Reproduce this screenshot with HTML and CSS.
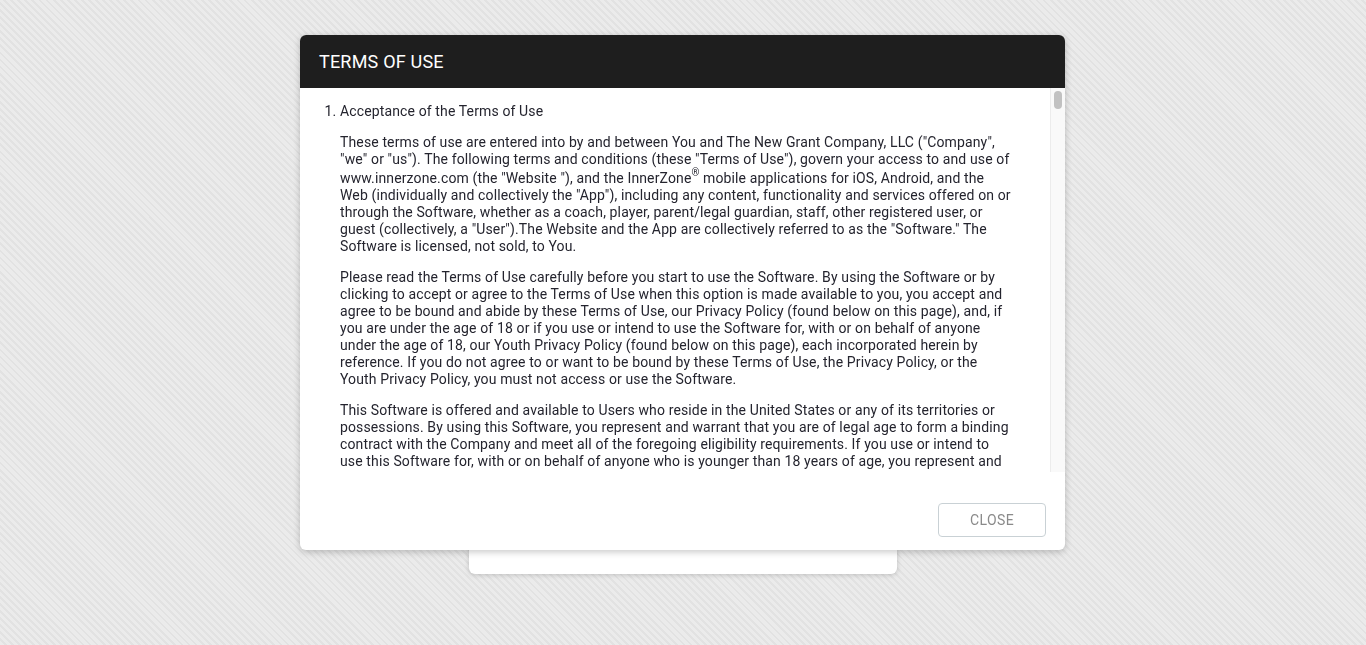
FILE: index.html
```html
<!DOCTYPE html>
<html lang="en">
<head>
<meta charset="utf-8">
<title>Terms of Use</title>
<link rel="stylesheet" href="styles.css">
</head>
<body>
<div class="page-card"></div>

<div class="modal">
  <div class="modal-header">
    <h2 class="modal-title">TERMS OF USE</h2>
  </div>
  <div class="modal-body">
    <div class="terms">
      <ol class="terms-list">
        <li>
          <div class="terms-heading">Acceptance of the Terms of Use</div>
          <p>These terms of use are entered into by and between You and The New Grant Company, LLC ("Company",<br>"we" or "us"). The following terms and conditions (these "Terms of Use"), govern your access to and use of<br>www.innerzone.com (the "Website "), and the InnerZone<sup>®</sup> mobile applications for iOS, Android, and the<br>Web (individually and collectively the "App"), including any content, functionality and services offered on or<br>through the Software, whether as a coach, player, parent/legal guardian, staff, other registered user, or<br>guest (collectively, a "User").The Website and the App are collectively referred to as the "Software." The<br>Software is licensed, not sold, to You.</p>
          <p>Please read the Terms of Use carefully before you start to use the Software. By using the Software or by<br>clicking to accept or agree to the Terms of Use when this option is made available to you, you accept and<br>agree to be bound and abide by these Terms of Use, our Privacy Policy (found below on this page), and, if<br>you are under the age of 18 or if you use or intend to use the Software for, with or on behalf of anyone<br>under the age of 18, our Youth Privacy Policy (found below on this page), each incorporated herein by<br>reference. If you do not agree to or want to be bound by these Terms of Use, the Privacy Policy, or the<br>Youth Privacy Policy, you must not access or use the Software.</p>
          <p>This Software is offered and available to Users who reside in the United States or any of its territories or<br>possessions. By using this Software, you represent and warrant that you are of legal age to form a binding<br>contract with the Company and meet all of the foregoing eligibility requirements. If you use or intend to<br>use this Software for, with or on behalf of anyone who is younger than 18 years of age, you represent and</p>
        </li>
      </ol>
    </div>
    <div class="scrollbar"><div class="scrollbar-thumb"></div></div>
  </div>
  <div class="modal-footer">
    <button class="btn-close" type="button">CLOSE</button>
  </div>
</div>
</body>
</html>
```
FILE: styles.css
```css
html, body {
  margin: 0;
  padding: 0;
}

body {
  height: 645px;
  overflow: hidden;
  font-family: Roboto, "Liberation Sans", sans-serif;
  background-color: #ebebeb;
  background-image: repeating-linear-gradient(45deg, #ebebeb 0, #ebebeb 3px, #e2e2e2 3px, #e2e2e2 5px);
}

.page-card {
  width: 428px;
  height: 534px;
  margin: 40px auto 0;
  background: #fff;
  border-radius: 6px;
  box-shadow: 0 1px 5px rgba(0, 0, 0, 0.18);
}

.modal {
  position: fixed;
  top: 35px;
  left: 300px;
  width: 765px;
  height: 515px;
  display: flex;
  flex-direction: column;
  background: #fff;
  border-radius: 6px;
  box-shadow: 0 2px 7px rgba(0, 0, 0, 0.22);
  overflow: hidden;
}

.modal-header {
  height: 53px;
  flex: none;
  background: #1e1e1e;
  display: flex;
  align-items: center;
  padding: 0 19px;
}

.modal-title {
  margin: 0;
  color: #fff;
  font-size: 18px;
  font-weight: 400;
  letter-spacing: 0.2px;
  line-height: 1;
}

.modal-body {
  flex: none;
  height: 384px;
  display: flex;
}

.terms {
  flex: 1;
  overflow: hidden;
  color: #24242e;
  font-size: 14px;
  line-height: 17px;
  letter-spacing: 0.13px;
}

.terms-list {
  margin: 15px 0 0;
  padding: 0 0 0 40px;
}

.terms-heading {
  margin: 0 0 14px;
}

.terms p {
  margin: 0 0 14px;
  white-space: nowrap;
}

.terms sup {
  font-size: 10px;
  line-height: 10px;
  vertical-align: 7px;
}

.scrollbar {
  width: 15px;
  flex: none;
  background: #f9f9f9;
  border-left: 1px solid #ececec;
  padding: 3px 0 0 3px;
  box-sizing: border-box;
}

.scrollbar-thumb {
  width: 8px;
  height: 18px;
  background: #c1c1c1;
  border-radius: 4px;
}

.modal-footer {
  flex: 1;
  display: flex;
  justify-content: flex-end;
  align-items: flex-start;
  padding: 31px 19px 0 0;
}

.btn-close {
  width: 108px;
  height: 34px;
  background: #fff;
  border: 1px solid #c9d1d5;
  border-radius: 4px;
  color: #8a8a8a;
  font-family: Roboto, "Liberation Sans", sans-serif;
  font-size: 14px;
  letter-spacing: 0.4px;
  padding: 0;
  cursor: pointer;
}
```
